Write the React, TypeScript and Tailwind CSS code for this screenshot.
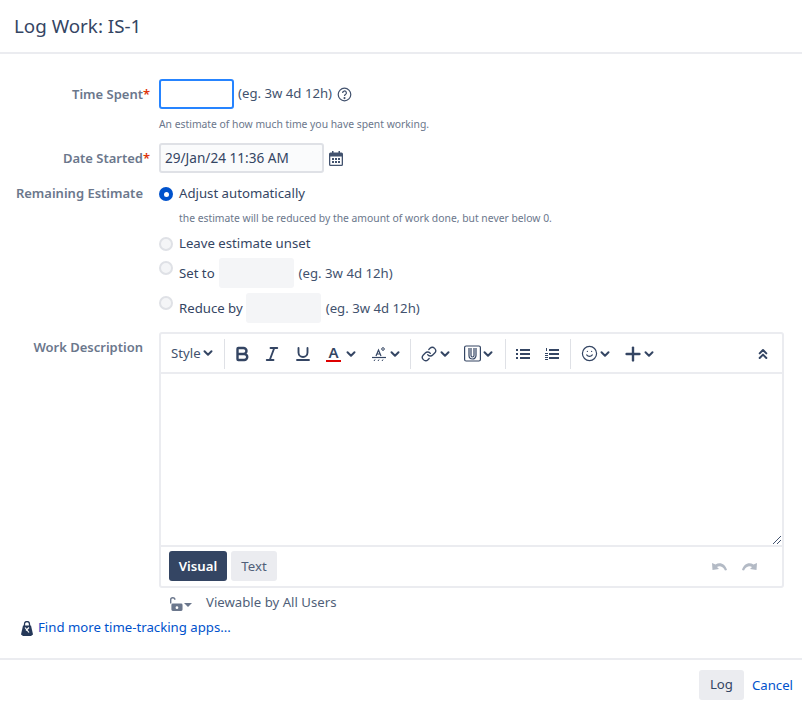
import { ChevronDown, ChevronsUp, Bold, Italic, Underline, Link, Smile, Plus } from "lucide-react";

const font = "font-['Noto_Sans',sans-serif]";

// Small chevron used by the toolbar dropdowns
const Caret = () => <ChevronDown className="w-[14px] h-[14px] mx-px shrink-0 text-[#344563]" strokeWidth={3.4} />;

const Divider = () => <div className="w-px h-[30px] bg-[#dfe1e6] shrink-0" />;

const Label = ({ text, required }: { text: string; required?: boolean }) => (
    <div className="relative w-[138px] shrink-0 text-right text-[13px] font-semibold text-[#6b778c] leading-5 mr-[16px]">
        {text}
        {required && <span className="absolute left-full top-0 text-[#de350b]">*</span>}
    </div>
);

const Radio = ({ checked }: { checked?: boolean }) =>
    checked ? (
        <div className="w-[14px] h-[14px] rounded-full bg-[#0052cc] flex items-center justify-center shrink-0">
            <div className="w-[5px] h-[5px] rounded-full bg-white" />
        </div>
    ) : (
        <div className="w-[14px] h-[14px] rounded-full bg-[#f4f5f7] border-2 border-[#dfe1e6] shrink-0" />
    );

const Example = () => <span className="text-[#42526e]">(eg. 3w 4d 12h)</span>;

const SmallInput = () => <div className="w-[75px] h-[30px] rounded-[3px] bg-[#f4f5f7]" />;

const Toolbar = () => (
    <div className="h-[40px] flex items-center border-b-2 border-[#ebecf0] text-[#344563] pl-[10px] pr-[11px] pt-px">
        <div className="flex items-center text-[13.2px] text-[#42526e] w-[45px]">
            Style
            <span className="-ml-[1px]"><Caret /></span>
        </div>
        <div className="ml-[8px]"><Divider /></div>
        <Bold className="w-[18px] h-[18px] ml-[8px]" strokeWidth={3.2} />
        <Italic className="w-[18px] h-[18px] ml-[12px]" strokeWidth={2.5} />
        <Underline className="w-[18px] h-[18px] ml-[13px]" strokeWidth={2.5} />
        <div className="ml-[14px] w-[15px] flex flex-col items-center">
            <span className="text-[15px] font-semibold leading-[15px] text-[#344563]">A</span>
            <div className="w-[15px] h-[2px] bg-[#de0000]" />
        </div>
        <div className="ml-[2px]"><Caret /></div>
        {/* text effects glyph */}
        <svg viewBox="0 0 16 16" className="w-4 h-4 ml-[12px] shrink-0" fill="none" stroke="#344563" strokeWidth="1.2">
            <path d="M5 10l2.500-6 2.500 6M6 8h3" />
            <circle cx="12" cy="3" r="1.300" strokeWidth="1" />
            <path d="M1 11.500h14" />
            <path d="M3 15l1-1.500M7 15l1-1.500M11 15l1-1.500" strokeWidth="1" />
        </svg>
        <Caret />
        <div className="ml-[7px]"><Divider /></div>
        <Link className="w-4 h-4 ml-[10px] shrink-0" strokeWidth={2} />
        <Caret />
        {/* attachment glyph */}
        <svg viewBox="0 0 17 17" className="w-[17px] h-[17px] ml-[11px] shrink-0" fill="none" stroke="#344563" strokeWidth="1.200">
            <rect x="0.600" y="1" width="15.800" height="15" rx="1.500" />
            <path d="M5 3v7.500a3.500 3.500 0 0 0 7 0V3M7 3v7.500a1.500 1.500 0 0 0 3 0V3" />
        </svg>
        <div className="-ml-[1px]"><Caret /></div>
        <div className="ml-[9px]"><Divider /></div>
        {/* bullet list */}
        <svg viewBox="0 0 14 12" className="w-[14px] h-[12px] ml-[10px] shrink-0" fill="#344563">
            <rect x="0" y="1" width="2" height="2" />
            <rect x="4" y="1" width="10" height="2" />
            <rect x="0" y="5" width="2" height="2" />
            <rect x="4" y="5" width="10" height="2" />
            <rect x="0" y="9" width="2" height="2" />
            <rect x="4" y="9" width="10" height="2" />
        </svg>
        {/* numbered list */}
        <svg viewBox="0 0 14 12" className="w-[14px] h-[12px] ml-[15px] shrink-0" fill="#344563">
            <rect x="1" y="0" width="1" height="3" />
            <rect x="0" y="5" width="3" height="1" />
            <rect x="0" y="7" width="3" height="1" />
            <rect x="0" y="9" width="3" height="1" />
            <rect x="0" y="11" width="3" height="1" />
            <rect x="4" y="1" width="10" height="2" />
            <rect x="4" y="5" width="10" height="2" />
            <rect x="4" y="9" width="10" height="2" />
        </svg>
        <div className="ml-[11px]"><Divider /></div>
        <Smile className="w-[17px] h-[17px] ml-[10px]" strokeWidth={1.7} />
        <div className="-ml-[1px]"><Caret /></div>
        <Plus className="w-[22px] h-[22px] ml-[9px]" strokeWidth={2.600} />
        <div className="-ml-[3px]"><Caret /></div>
        <ChevronsUp className="w-4 h-4 ml-auto" strokeWidth={3} />
    </div>
);

const App = () => {
    return (
        <div className={`w-[802px] h-[707px] bg-white overflow-hidden text-[13.2px] text-[#344563] ${font}`}>
            <div className="h-[54px] border-b-2 border-[#ebecf0] pl-[14px] pt-[12px] text-[18.8px] leading-7 text-[#344563]">
                Log Work: IS-1
            </div>

            <div className="pt-[25px] pl-[5px]">
                {/* Time spent */}
                <div className="flex items-center h-[30px]">
                    <Label text="Time Spent" required />
                    <div className="w-[75px] h-[30px] rounded-[3px] border-2 border-[#2684ff] bg-white mr-[4px]" />
                    <Example />
                    <svg viewBox="0 0 16 16" className="w-[15px] h-[15px] ml-[5px]" fill="none" stroke="#42526e" strokeWidth="1.300">
                        <circle cx="8" cy="8" r="6.700" />
                        <path d="M6 6.300a2 2 0 1 1 3 1.700c-.7.400-1 .8-1 1.600" />
                        <circle cx="8" cy="11.800" r=".5" fill="#42526e" />
                    </svg>
                </div>
                <div className="ml-[154px] mt-[7px] h-[16px] text-[10.35px] leading-4 text-[#6b778c]">
                    An estimate of how much time you have spent working.
                </div>

                {/* Date started */}
                <div className="flex items-center h-[30px] mt-[11px]">
                    <Label text="Date Started" required />
                    <div className="w-[165px] h-[30px] rounded-[3px] border-2 border-[#dfe1e6] bg-[#fafbfc] px-[4px] leading-[26px] text-[13.6px] text-[#344563] mr-[5px]">
                        29/Jan/24 11:36 AM
                    </div>
                    <svg viewBox="0 0 14 15" className="w-[14px] h-[15px]" fill="#42526e">
                        <path fillRule="evenodd" d="M3 0h1.500v1.500h5V0H11v1.500h1.500A1.500 1.500 0 0 1 14 3v10.500a1.500 1.500 0 0 1-1.500 1.500h-11A1.500 1.500 0 0 1 0 13.500V3a1.500 1.500 0 0 1 1.500-1.500H3zM1.300 5.500v8c0 .2.100.300.300.300h10.800c.2 0 .300-.100.300-.300v-8zM3 7h2v2H3zm3 0h2v2H6zm3 0h2v2H9zm-6 3h2v2H3zm3 0h2v2H6zm3 0h2v2H9z" />
                    </svg>
                </div>

                {/* Remaining estimate */}
                <div className="flex mt-[11px]">
                    <div className="-mt-px"><Label text="Remaining Estimate" /></div>
                    <div className="flex flex-col">
                        <div className="flex items-center gap-[6px] h-5">
                            <Radio checked />
                            <span>Adjust automatically</span>
                        </div>
                        <div className="ml-[20px] mt-[6px] h-[16px] text-[10.35px] leading-4 text-[#6b778c]">
                            the estimate will be reduced by the amount of work done, but never below 0.
                        </div>
                        <div className="flex items-center gap-[6px] h-5 mt-[8px]">
                            <Radio />
                            <span>Leave estimate unset</span>
                        </div>
                        <div className="flex items-center h-[30px] mt-[4px]">
                            <div className="-mt-[11px] mr-[6px]"><Radio /></div>
                            <span className="mr-[4px] mt-[2px]">Set to</span>
                            <SmallInput />
                            <span className="ml-[5px] mt-[2px]"><Example /></span>
                        </div>
                        <div className="flex items-center h-[30px] mt-[5px]">
                            <div className="-mt-[11px] mr-[6px]"><Radio /></div>
                            <span className="mr-[3px] mt-[2px]">Reduce by</span>
                            <SmallInput />
                            <span className="ml-[5px] mt-[2px]"><Example /></span>
                        </div>
                    </div>
                </div>

                {/* Work description */}
                <div className="flex mt-[9px]">
                    <div className="pt-[5px]"><Label text="Work Description" /></div>
                    <div className="w-[625px] h-[256px] border-2 border-[#ebecf0] rounded-[3px] flex flex-col">
                        <Toolbar />
                        <div className="flex-1 relative border-b-2 border-[#ebecf0]">
                            <svg viewBox="0 0 10 10" className="absolute right-0 bottom-0 w-[10px] h-[10px]" stroke="#42526e" strokeWidth="1">
                                <path d="M1 9l8-8M5 9l4-4" />
                            </svg>
                        </div>
                        <div className="h-[39px] flex items-center pl-[8px] pr-[25px] pb-px">
                            <div className="w-[58px] h-[30px] pt-px rounded-[3px] bg-[#344563] text-white font-semibold flex items-center justify-center">
                                Visual
                            </div>
                            <div className="w-[46px] h-[30px] pt-px ml-[4px] rounded-[3px] bg-[#ebecf0] text-[#505f79] flex items-center justify-center">
                                Text
                            </div>
                            <svg viewBox="0 0 15 10" className="w-[15px] h-[10px] ml-auto" fill="#b3bac5">
                                <path d="M0 2l.5 7 6.500-1-2-2c2.500-1.500 6-.5 8 3.500l2-.500C13.500 3 8 .500 3.500 3.500z" />
                            </svg>
                            <svg viewBox="0 0 15 10" className="w-[15px] h-[10px] ml-[15px] -scale-x-100" fill="#b3bac5">
                                <path d="M0 2l.5 7 6.500-1-2-2c2.500-1.500 6-.5 8 3.500l2-.500C13.500 3 8 .500 3.500 3.500z" />
                            </svg>
                        </div>
                    </div>
                </div>

                {/* Viewable */}
                <div className="flex items-center h-5 mt-[5px] ml-[165px] text-[#505f79]">
                    <svg viewBox="0 0 14 16" className="w-[13px] h-[15px]" fill="#6b778c">
                        <path fillRule="evenodd" d="M3 8h9a1.500 1.500 0 0 1 1.500 1.500v5A1.500 1.500 0 0 1 12 16H3a1.500 1.500 0 0 1-1.500-1.500v-5A1.500 1.500 0 0 1 3 8zm4.500 3a1.500 1.500 0 1 0 0 3 1.500 1.500 0 0 0 0-3z" />
                        <path d="M0 8V4a3 3 0 0 1 6 0h-1.500a1.500 1.500 0 0 0-3 0v4z" />
                    </svg>
                    <div className="ml-[1px] mt-[3px] w-0 h-0 border-x-[4px] border-x-transparent border-t-[4px] border-t-[#6b778c]" />
                    <span className="ml-[14px]">Viewable by All Users</span>
                </div>

                {/* Marketplace link */}
                <div className="flex items-center h-5 mt-[5px] ml-[16px] text-[#0052cc]">
                    <svg viewBox="0 0 12 15" className="w-[12px] h-[15px] mr-[5px]">
                        <path d="M3.500 5V3a2.500 2.500 0 0 1 5 0v2" stroke="#253858" strokeWidth="1.300" fill="none" />
                        <path d="M2 4.500h8l2 9-2 1.500H2l-2-1.500z" fill="#253858" />
                        <path d="M4 6.500l4 5M8 6.500l-3 3" stroke="#fff" strokeWidth="1.200" fill="none" />
                    </svg>
                    Find more time-tracking apps...
                </div>
            </div>

            {/* Footer */}
            <div className="mt-[20px] border-t-2 border-[#ebecf0] flex items-start justify-end pt-[10px] pr-[9px]">
                <div className="w-[45px] h-[30px] rounded-[3px] bg-[#ebecf0] text-[#344563] flex items-center justify-center">
                    Log
                </div>
                <span className="ml-[8px] h-[30px] leading-[30px] text-[#0052cc]">Cancel</span>
            </div>
        </div>
    );
};

export default App;
